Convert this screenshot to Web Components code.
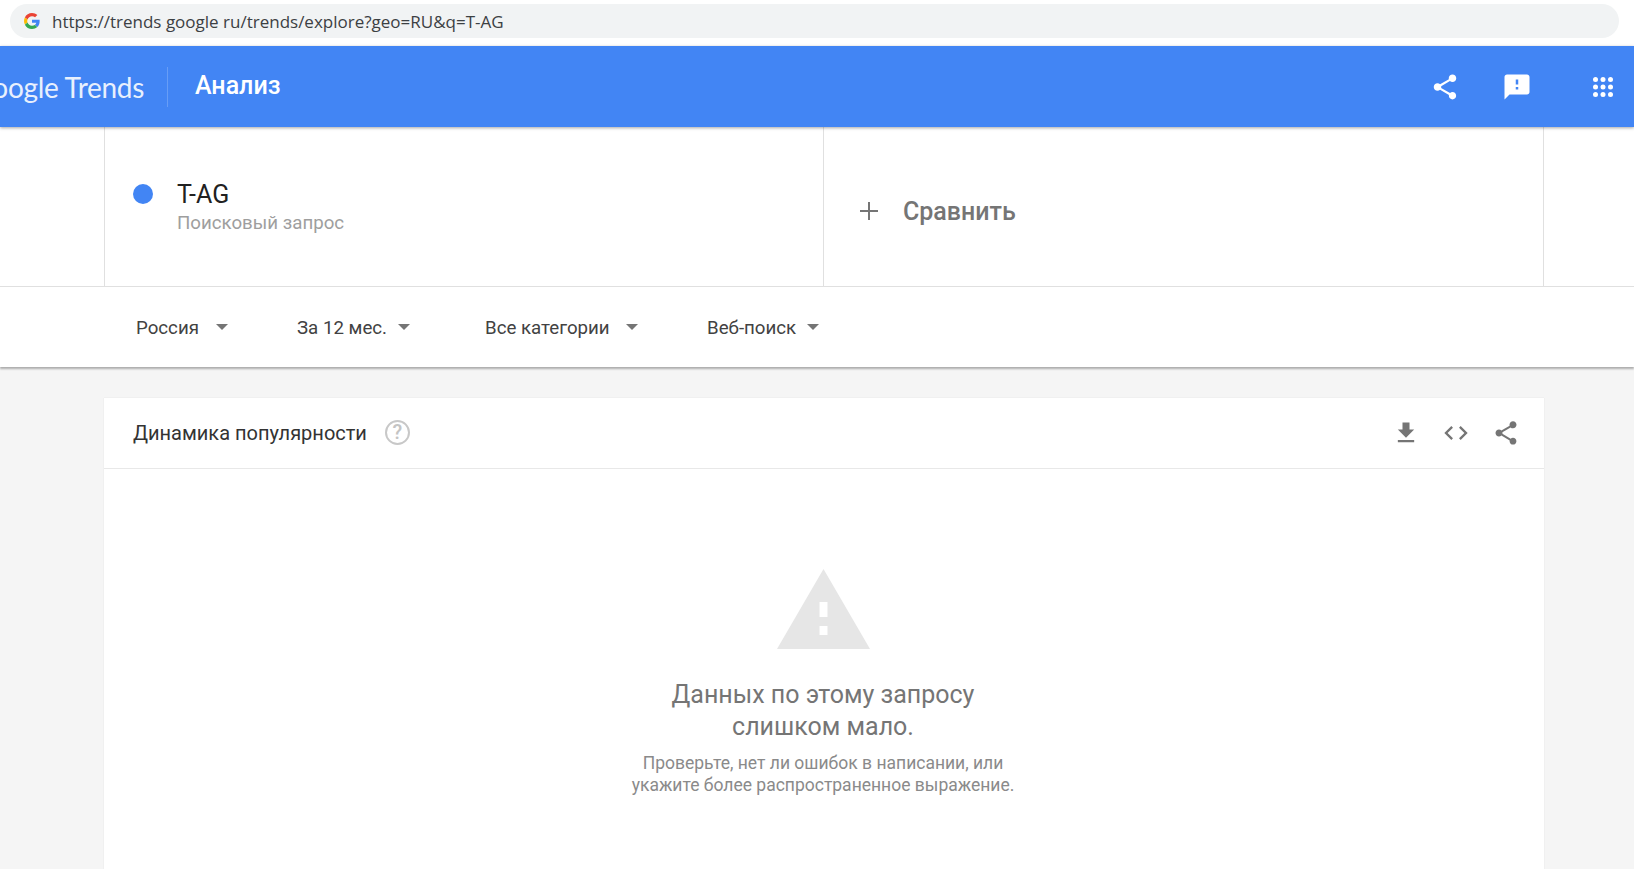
<!DOCTYPE html>
<html lang="ru">
<head>
<meta charset="utf-8">
<title>Google Trends</title>
<style>
  html, body {
    margin: 0;
    height: 100%;
    overflow: hidden;
    background: #f5f5f5;
    font-family: Roboto, "Liberation Sans", sans-serif;
  }
</style>
</head>
<body>
<address-bar url="https://trends google ru/trends/explore?geo=RU&amp;q=T-AG"></address-bar>
<trends-header title-text="Анализ"></trends-header>
<compare-row term="T-AG" kind="Поисковый запрос" action="Сравнить"></compare-row>
<filter-bar>
  <filter-item style="width: 161px; --gap: 17px">Россия</filter-item>
  <filter-item style="width: 188px; --gap: 11px">За 12 мес.</filter-item>
  <filter-item style="width: 222px; --gap: 16px">Все категории</filter-item>
  <filter-item style="--gap: 11px">Веб-поиск</filter-item>
</filter-bar>
<chart-card heading="Динамика популярности">
  <empty-state
    headline="Данных по этому запросу слишком мало."
    hint="Проверьте, нет ли ошибок в написании, или укажите более распространенное выражение."></empty-state>
</chart-card>

<script>
const SHARE = 'M18 16.08c-.76 0-1.44.3-1.96.77L8.91 12.7c.05-.23.09-.46.09-.7s-.04-.47-.09-.7l7.05-4.11c.54.5 1.25.81 2.04.81 1.66 0 3-1.34 3-3s-1.34-3-3-3-3 1.34-3 3c0 .24.04.47.09.7L8.04 9.81C7.5 9.31 6.79 9 6 9c-1.66 0-3 1.34-3 3s1.34 3 3 3c.79 0 1.5-.31 2.04-.81l7.12 4.16c-.05.21-.08.43-.08.65 0 1.61 1.31 2.92 2.92 2.92s2.92-1.31 2.92-2.92-1.31-2.92-2.92-2.92z';

class AddressBar extends HTMLElement {
  connectedCallback() {
    if (!this.shadowRoot) {
      this.attachShadow({ mode: 'open' });
      this.shadowRoot.innerHTML = `
        <style>
          :host {
            display: block;
            height: 46px;
            padding: 4px 15px 0 10px;
            box-sizing: border-box;
            background: #fff;
          }
          .pill {
            display: flex;
            align-items: center;
            gap: 12px;
            height: 34px;
            padding-left: 14px;
            border-radius: 17px;
            background: #f1f3f4;
          }
          svg { width: 16px; height: 16px; flex: none; }
          span {
            font: 17px "Open Sans", sans-serif;
            color: #3c4043;
            white-space: nowrap;
          }
        </style>
        <div class="pill">
          <svg viewBox="0 0 48 48">
            <path fill="#ea4335" d="M24 9.5c3.5 0 6.700 1.200 9.200 3.600l6.900-6.900C35.900 2.400 30.500 0 24 0 14.600 0 6.500 5.400 2.600 13.200l8 6.200C12.500 13.600 17.800 9.500 24 9.500z"/>
            <path fill="#4285f4" d="M46.900 24.500c0-1.600-.1-3.100-.4-4.500H24v9h12.900c-.6 3-2.200 5.500-4.700 7.200l7.700 6c4.500-4.200 7-10.300 7-17.700z"/>
            <path fill="#fbbc05" d="M10.500 28.600c-.5-1.400-.8-3-.8-4.600s.3-3.200.8-4.600l-8-6.200C.9 16.500 0 20.100 0 24s.9 7.500 2.600 10.800l7.900-6.200z"/>
            <path fill="#34a853" d="M24 48c6.500 0 11.900-2.100 15.900-5.800l-7.700-6c-2.200 1.400-4.900 2.300-8.200 2.300-6.200 0-11.500-4.200-13.400-9.800l-8 6.200C6.500 42.600 14.600 48 24 48z"/>
          </svg>
          <span>${this.getAttribute('url')}</span>
        </div>
      `;
    }
  }
}

class TrendsHeader extends HTMLElement {
  connectedCallback() {
    if (!this.shadowRoot) {
      this.attachShadow({ mode: 'open' });
      this.shadowRoot.innerHTML = `
        <style>
          :host {
            display: flex;
            align-items: center;
            position: relative;
            z-index: 2;
            height: 81px;
            background: #4285f4;
            color: #fff;
            box-shadow: 0 1px 3px rgba(0, 0, 0, .35);
            overflow: hidden;
          }
          .logo {
            flex: none;
            width: 167px;
            height: 40px;
            border-right: 1px solid rgba(255, 255, 255, .2);
            overflow: hidden;
            display: flex;
            justify-content: flex-end;
            align-items: center;
          }
          .logo span {
            flex: none;
            padding-right: 23px;
            font: 28px Lato, sans-serif;
            letter-spacing: -.3px;
            white-space: nowrap;
            opacity: .88;
          }
          .title {
            margin: -2px 0 0 27px;
            font: 500 25px Roboto, sans-serif;
            flex: 1;
          }
          .actions { display: flex; align-items: center; padding-right: 16px; gap: 42px; }
          .actions svg:last-child { margin-left: 14px; }
          svg { width: 30px; height: 30px; fill: #fff; display: block; }
        </style>
        <div class="logo"><span>Google Trends</span></div>
        <div class="title">${this.getAttribute('title-text')}</div>
        <div class="actions">
          <svg viewBox="0 0 24 24"><path d="${SHARE}"/></svg>
          <svg viewBox="0 0 24 24"><path d="M20 2H4c-1.100 0-2 .9-2 2v18l4-4h14c1.100 0 2-.9 2-2V4c0-1.100-.9-2-2-2zm-7 12h-2v-2h2v2zm0-4h-2V6h2v4z"/></svg>
          <svg viewBox="0 0 24 24"><circle cx="6" cy="6" r="2"/><circle cx="12" cy="6" r="2"/><circle cx="18" cy="6" r="2"/><circle cx="6" cy="12" r="2"/><circle cx="12" cy="12" r="2"/><circle cx="18" cy="12" r="2"/><circle cx="6" cy="18" r="2"/><circle cx="12" cy="18" r="2"/><circle cx="18" cy="18" r="2"/></svg>
        </div>
      `;
    }
  }
}

class CompareRow extends HTMLElement {
  connectedCallback() {
    if (!this.shadowRoot) {
      this.attachShadow({ mode: 'open' });
      this.shadowRoot.innerHTML = `
        <style>
          :host {
            display: grid;
            grid-template-columns: 105px 719px 720px 1fr;
            height: 160px;
            background: #fff;
            border-bottom: 1px solid #e0e0e0;
            box-sizing: border-box;
          }
          .cell { border-right: 1px solid #e0e0e0; }
          .term {
            display: flex;
            align-items: flex-start;
            gap: 24px;
            padding: 57px 0 0 28px;
          }
          .dot { width: 20px; height: 20px; border-radius: 50%; background: #4285f4; flex: none; }
          .name { font-size: 25px; line-height: 30px; margin-top: -4px; color: #212121; }
          .kind { font-size: 18.7px; line-height: 24px; margin-top: 1px; color: #9e9e9e; }
          .add {
            display: flex;
            align-items: center;
            gap: 24px;
            padding: 9px 0 0 35px;
            color: #757575;
            font-size: 25px;
            font-weight: 500;
          }
          .add svg { width: 20px; height: 20px; flex: none; }
        </style>
        <div class="cell"></div>
        <div class="cell term">
          <div class="dot"></div>
          <div>
            <div class="name">${this.getAttribute('term')}</div>
            <div class="kind">${this.getAttribute('kind')}</div>
          </div>
        </div>
        <div class="cell add">
          <svg viewBox="0 0 20 20"><path d="M9 1h2v8h8v2h-8v8H9v-8H1V9h8z" fill="#757575"/></svg>
          <span>${this.getAttribute('action')}</span>
        </div>
        <div></div>
      `;
    }
  }
}

class FilterBar extends HTMLElement {
  connectedCallback() {
    if (!this.shadowRoot) {
      this.attachShadow({ mode: 'open' });
      this.shadowRoot.innerHTML = `
        <style>
          :host {
            display: flex;
            align-items: center;
            position: relative;
            height: 80px;
            padding: 2px 0 0 136px;
            box-sizing: border-box;
            background: #fff;
            box-shadow: 0 2px 2px rgba(0, 0, 0, .3);
          }
        </style>
        <slot></slot>
      `;
    }
  }
}

class FilterItem extends HTMLElement {
  connectedCallback() {
    if (!this.shadowRoot) {
      this.attachShadow({ mode: 'open' });
      this.shadowRoot.innerHTML = `
        <style>
          :host {
            display: flex;
            align-items: center;
            gap: var(--gap, 16px);
            flex: none;
            font-size: 18.7px;
            color: #424242;
          }
          i {
            width: 0;
            height: 0;
            margin-top: -2px;
            border: 6.5px solid transparent;
            border-top: 6.5px solid #757575;
            border-bottom: 0;
          }
        </style>
        <slot></slot><i></i>
      `;
    }
  }
}

class ChartCard extends HTMLElement {
  connectedCallback() {
    if (!this.shadowRoot) {
      this.attachShadow({ mode: 'open' });
      this.shadowRoot.innerHTML = `
        <style>
          :host {
            display: block;
            width: 1440px;
            height: 471px;
            margin: 31px 0 0 104px;
            background: #fff;
            box-shadow: 0 0 1px rgba(0, 0, 0, .12);
          }
          header {
            display: flex;
            align-items: center;
            height: 71px;
            padding: 0 24px 0 29px;
            border-bottom: 1px solid #e8e8e8;
            box-sizing: border-box;
          }
          h2 { margin: 0; font-size: 20px; font-weight: 400; color: #333; }
          .help {
            width: 25px;
            height: 25px;
            margin: -1px 0 0 18px;
            box-sizing: border-box;
            border: 2.5px solid #c8c8c8;
            border-radius: 50%;
            color: #c4c4c4;
            font-size: 20px;
            font-weight: 500;
            line-height: 20px;
            text-align: center;
          }
          .tools { margin-left: auto; display: flex; align-items: center; gap: 22px; }
          svg { width: 28px; height: 28px; fill: #757575; display: block; }
        </style>
        <header>
          <h2>${this.getAttribute('heading')}</h2>
          <div class="help">?</div>
          <div class="tools">
            <svg viewBox="0 0 24 24"><path d="M19 9h-4V3H9v6H5l7 7 7-7zM5 18v2h14v-2H5z"/></svg>
            <svg viewBox="0 0 24 24"><path d="M9.400 16.600 4.800 12l4.600-4.600L8 6l-6 6 6 6 1.400-1.400zm5.200 0 4.600-4.600-4.600-4.600L16 6l6 6-6 6-1.400-1.400z"/></svg>
            <svg viewBox="0 0 24 24"><path d="${SHARE}"/></svg>
          </div>
        </header>
        <slot></slot>
      `;
    }
  }
}

class EmptyState extends HTMLElement {
  connectedCallback() {
    if (!this.shadowRoot) {
      this.attachShadow({ mode: 'open' });
      this.shadowRoot.innerHTML = `
        <style>
          :host {
            display: flex;
            flex-direction: column;
            align-items: center;
            padding: 100px 2px 0 0;
            text-align: center;
          }
          svg { width: 93px; height: 80px; display: block; }
          h3 {
            width: 340px;
            margin: 30px 0 0;
            font-size: 25px;
            font-weight: 400;
            line-height: 32px;
            color: #757575;
          }
          p {
            width: 400px;
            margin: 9px 0 0;
            font-size: 17.5px;
            line-height: 22px;
            color: #8a8a8a;
          }
        </style>
        <svg viewBox="0 0 93 80"><path fill="#e6e6e6" fill-rule="evenodd" d="M46.500 0 93 80H0zM42.500 33v15h8V33zM42.500 57v9h8v-9z"/></svg>
        <h3>${this.getAttribute('headline')}</h3>
        <p>${this.getAttribute('hint')}</p>
      `;
    }
  }
}

customElements.define('address-bar', AddressBar);
customElements.define('trends-header', TrendsHeader);
customElements.define('compare-row', CompareRow);
customElements.define('filter-bar', FilterBar);
customElements.define('filter-item', FilterItem);
customElements.define('chart-card', ChartCard);
customElements.define('empty-state', EmptyState);
</script>
</body>
</html>
